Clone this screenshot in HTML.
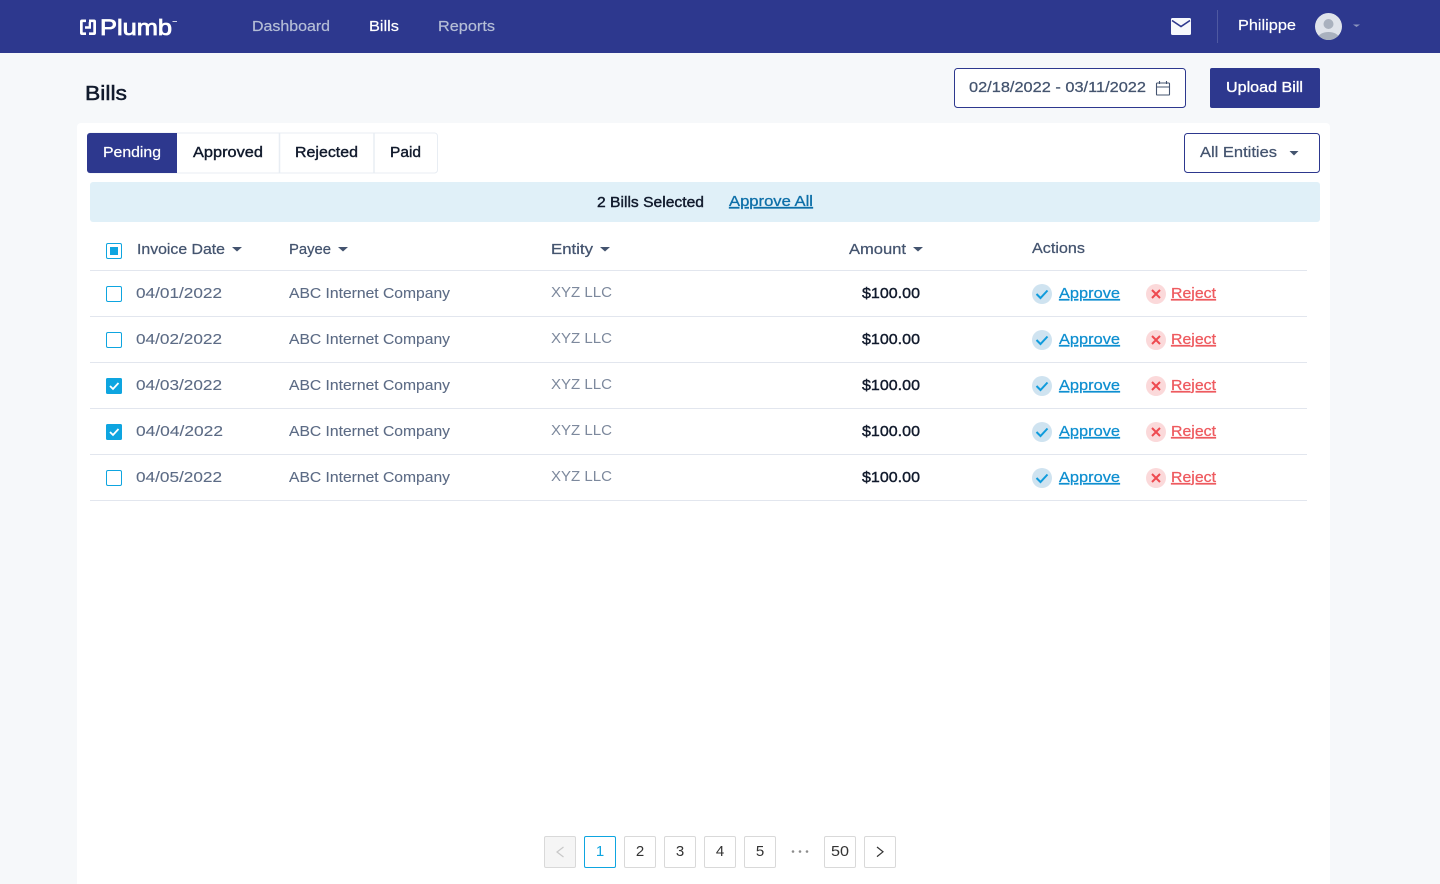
<!DOCTYPE html>
<html lang="en"><head><meta charset="utf-8"><title>Bills</title>
<style>
html,body{margin:0;padding:0;width:1440px;height:884px;overflow:hidden;background:#f6f8fa}
svg{display:block}
text{font-family:"Liberation Sans",sans-serif;font-size:15px;fill:#44546f;stroke:currentColor;stroke-width:0}
.n{fill:#b4bdd6;stroke:#b4bdd6;stroke-width:.2}.w{fill:#fff;stroke:#fff;stroke-width:.2}.k{fill:#111a2c}.h{fill:#44546f;stroke:#44546f;stroke-width:.25}.g{fill:#5c6b85;stroke:#5c6b85;stroke-width:.1}
.a{fill:#0f8fd0;stroke:#0f8fd0;stroke-width:.25}.r{fill:#ee5a5f;stroke:#ee5a5f;stroke-width:.25}
.b{fill:#111a2c;stroke:#111a2c;stroke-width:.4}
.p{fill:#333;text-anchor:middle}
</style></head><body>
<svg width="1440" height="884" viewBox="0 0 1440 884" xmlns="http://www.w3.org/2000/svg">
<rect width="1440" height="53" fill="#2d388e"/>
<rect y="53" width="1440" height="831" fill="#f6f8fa"/>
<!-- logo -->
<path d="M86 19.500H82a2 2 0 0 0-2 2V33a2 2 0 0 0 2 2h4v-2.600h-3.300V22.100H86z" fill="#fff"/>
<path d="M89 19.500h5a2 2 0 0 1 2 2V33a2 2 0 0 1-2 2h-5v-2.600h4.300V22.100H91V28.800H85V26.200H88.700V22.100H89z" fill="#fff"/>
<text x="100" y="35" textLength="72" lengthAdjust="spacingAndGlyphs" style="font-size:22px;fill:#fff;stroke:#fff;stroke-width:.8">Plumb</text>
<rect x="172.500" y="21" width="4.500" height="1" fill="#cfd3e6"/>
<!-- nav -->
<text x="252" y="31" class="n" textLength="78" lengthAdjust="spacingAndGlyphs" style="font-size:14.500px">Dashboard</text>
<text x="369" y="31" class="w" textLength="30" lengthAdjust="spacingAndGlyphs" style="font-size:14.500px">Bills</text>
<text x="438" y="31" class="n" textLength="57" lengthAdjust="spacingAndGlyphs" style="font-size:14.500px">Reports</text>
<!-- mail -->
<rect x="1171" y="18" width="20" height="17" rx="1.500" fill="#f6f8fc"/>
<path d="M1172 20.500l9 6 9-6" fill="none" stroke="#2d388e" stroke-width="1.600"/>
<rect x="1217" y="10" width="1" height="33" fill="#4f59a1"/>
<text x="1238" y="30" class="w" textLength="58" lengthAdjust="spacingAndGlyphs">Philippe</text>
<!-- avatar -->
<clipPath id="av"><circle cx="1328.500" cy="26.500" r="13.500"/></clipPath>
<circle cx="1328.500" cy="26.500" r="13.500" fill="#dfe3ea"/>
<g clip-path="url(#av)"><circle cx="1328.500" cy="24" r="5" fill="#a9b1be"/><ellipse cx="1328.500" cy="39" rx="11" ry="7" fill="#a9b1be"/></g>
<path d="M1353 24.500h7l-3.500 2.500z" fill="#8c94bd"/>
<!-- title -->
<text x="85" y="100" textLength="42" lengthAdjust="spacingAndGlyphs" style="font-size:20px;fill:#111a2c;stroke:#111a2c;stroke-width:.5">Bills</text>
<!-- date -->
<rect x="954.500" y="68.500" width="231" height="39" rx="3" fill="#fff" stroke="#2d388e"/>
<text x="969" y="92" class="h" textLength="177" lengthAdjust="spacingAndGlyphs">02/18/2022 - 03/11/2022</text>
<g fill="none" stroke="#44546f" stroke-width="1.100"><rect x="1156.500" y="83" width="13" height="12" rx=".8"/><path d="M1156.500 87h13M1159.500 81v3M1166.500 81v3"/></g>
<rect x="1210" y="68" width="110" height="40" rx="2" fill="#2d388e"/>
<text x="1226" y="92" textLength="77" lengthAdjust="spacingAndGlyphs" style="fill:#fff;stroke:#fff;stroke-width:.35">Upload Bill</text>
<!-- card -->
<rect x="77" y="123" width="1253" height="780" rx="4" fill="#fff"/>
<!-- tabs -->
<rect x="87.500" y="133" width="350" height="40" rx="3" fill="#fff" stroke="#e8edf3"/>
<path d="M177 133h-87a3 3 0 0 0-3 3v34a3 3 0 0 0 3 3h87z" fill="#2d388e"/>
<path d="M279.500 133v40M374 133v40" stroke="#e8edf3" stroke-width="1.500"/>
<text x="103" y="157" class="w" textLength="58" lengthAdjust="spacingAndGlyphs">Pending</text>
<text x="193" y="157" class="b" textLength="70" lengthAdjust="spacingAndGlyphs">Approved</text>
<text x="295" y="157" class="b" textLength="63" lengthAdjust="spacingAndGlyphs">Rejected</text>
<text x="390" y="157" class="b" textLength="31" lengthAdjust="spacingAndGlyphs">Paid</text>
<rect x="1184.500" y="133.500" width="135" height="39" rx="3" fill="#fff" stroke="#2d388e"/>
<text x="1200" y="157" class="h" textLength="77" lengthAdjust="spacingAndGlyphs">All Entities</text>
<path d="M1289.500 151h9l-4.500 4.500z" fill="#44546f"/>
<!-- banner -->
<rect x="90" y="182" width="1230" height="40" rx="3" fill="#e0f0f8"/>
<text x="597" y="207" class="b" textLength="107" lengthAdjust="spacingAndGlyphs" style="font-size:14.500px">2 Bills Selected</text>
<text x="729" y="206" textLength="84" lengthAdjust="spacingAndGlyphs" style="fill:#0d6fa8;stroke:#0d6fa8;stroke-width:.3;text-decoration:underline">Approve All</text>
<!-- header -->
<rect x="106.500" y="243.500" width="15" height="15" rx="1.500" fill="#fff" stroke="#0ea5e0"/>
<rect x="110" y="247" width="8" height="8" fill="#0ea5e0"/>
<text x="137" y="254" class="h" textLength="88" lengthAdjust="spacingAndGlyphs">Invoice Date</text>
<path d="M232 247h10l-5 4.500z" fill="#44546f"/>
<text x="289" y="254" class="h" textLength="42" lengthAdjust="spacingAndGlyphs">Payee</text>
<path d="M338 247h10l-5 4.500z" fill="#44546f"/>
<text x="551" y="254" class="h" textLength="42" lengthAdjust="spacingAndGlyphs">Entity</text>
<path d="M600 247h10l-5 4.500z" fill="#44546f"/>
<text x="849" y="254" class="h" textLength="57" lengthAdjust="spacingAndGlyphs">Amount</text>
<path d="M913 247h10l-5 4.500z" fill="#44546f"/>
<text x="1032" y="253" class="h" textLength="53" lengthAdjust="spacingAndGlyphs">Actions</text>
<!-- row lines -->
<path d="M90 270.500h1217M90 316.500h1217M90 362.500h1217M90 408.500h1217M90 454.500h1217M90 500.500h1217" stroke="#e2e6ee"/>

<!-- row 1 -->
<rect x="106.500" y="286.500" width="15" height="15" rx="1.500" fill="#fff" stroke="#0ea5e0"/>
<text x="136" y="298" class="g" textLength="86" lengthAdjust="spacingAndGlyphs">04/01/2022</text>
<text x="289" y="298" class="g" textLength="161" lengthAdjust="spacingAndGlyphs">ABC Internet Company</text>
<text x="551" y="297" style="fill:#7d899d" textLength="61" lengthAdjust="spacingAndGlyphs">XYZ LLC</text>
<text x="862" y="298" class="b" textLength="58" lengthAdjust="spacingAndGlyphs">$100.00</text>
<circle cx="1042" cy="294" r="10" fill="#cfe3f0"/><path d="M1036.500 294l4 4 7-7.500" fill="none" stroke="#0f9bdc" stroke-width="2"/>
<text x="1059" y="298" class="a" textLength="61" lengthAdjust="spacingAndGlyphs" style="text-decoration:underline">Approve</text>
<circle cx="1156" cy="294" r="10" fill="#fbd9da"/><path d="M1152 290l8 8m0-8l-8 8" fill="none" stroke="#ee4a50" stroke-width="2"/>
<text x="1171" y="298" class="r" textLength="45" lengthAdjust="spacingAndGlyphs" style="text-decoration:underline">Reject</text>

<!-- row 2 -->
<rect x="106.500" y="332.500" width="15" height="15" rx="1.500" fill="#fff" stroke="#0ea5e0"/>
<text x="136" y="344" class="g" textLength="86" lengthAdjust="spacingAndGlyphs">04/02/2022</text>
<text x="289" y="344" class="g" textLength="161" lengthAdjust="spacingAndGlyphs">ABC Internet Company</text>
<text x="551" y="343" style="fill:#7d899d" textLength="61" lengthAdjust="spacingAndGlyphs">XYZ LLC</text>
<text x="862" y="344" class="b" textLength="58" lengthAdjust="spacingAndGlyphs">$100.00</text>
<circle cx="1042" cy="340" r="10" fill="#cfe3f0"/><path d="M1036.500 340l4 4 7-7.500" fill="none" stroke="#0f9bdc" stroke-width="2"/>
<text x="1059" y="344" class="a" textLength="61" lengthAdjust="spacingAndGlyphs" style="text-decoration:underline">Approve</text>
<circle cx="1156" cy="340" r="10" fill="#fbd9da"/><path d="M1152 336l8 8m0-8l-8 8" fill="none" stroke="#ee4a50" stroke-width="2"/>
<text x="1171" y="344" class="r" textLength="45" lengthAdjust="spacingAndGlyphs" style="text-decoration:underline">Reject</text>

<!-- row 3 -->
<rect x="106" y="378" width="16" height="16" rx="1.500" fill="#0ea5e0"/><path d="M110 386l3 3 5.500-6" fill="none" stroke="#fff" stroke-width="1.800"/>
<text x="136" y="390" class="g" textLength="86" lengthAdjust="spacingAndGlyphs">04/03/2022</text>
<text x="289" y="390" class="g" textLength="161" lengthAdjust="spacingAndGlyphs">ABC Internet Company</text>
<text x="551" y="389" style="fill:#7d899d" textLength="61" lengthAdjust="spacingAndGlyphs">XYZ LLC</text>
<text x="862" y="390" class="b" textLength="58" lengthAdjust="spacingAndGlyphs">$100.00</text>
<circle cx="1042" cy="386" r="10" fill="#cfe3f0"/><path d="M1036.500 386l4 4 7-7.500" fill="none" stroke="#0f9bdc" stroke-width="2"/>
<text x="1059" y="390" class="a" textLength="61" lengthAdjust="spacingAndGlyphs" style="text-decoration:underline">Approve</text>
<circle cx="1156" cy="386" r="10" fill="#fbd9da"/><path d="M1152 382l8 8m0-8l-8 8" fill="none" stroke="#ee4a50" stroke-width="2"/>
<text x="1171" y="390" class="r" textLength="45" lengthAdjust="spacingAndGlyphs" style="text-decoration:underline">Reject</text>

<!-- row 4 -->
<rect x="106" y="424" width="16" height="16" rx="1.500" fill="#0ea5e0"/><path d="M110 432l3 3 5.500-6" fill="none" stroke="#fff" stroke-width="1.800"/>
<text x="136" y="436" class="g" textLength="87" lengthAdjust="spacingAndGlyphs">04/04/2022</text>
<text x="289" y="436" class="g" textLength="161" lengthAdjust="spacingAndGlyphs">ABC Internet Company</text>
<text x="551" y="435" style="fill:#7d899d" textLength="61" lengthAdjust="spacingAndGlyphs">XYZ LLC</text>
<text x="862" y="436" class="b" textLength="58" lengthAdjust="spacingAndGlyphs">$100.00</text>
<circle cx="1042" cy="432" r="10" fill="#cfe3f0"/><path d="M1036.500 432l4 4 7-7.500" fill="none" stroke="#0f9bdc" stroke-width="2"/>
<text x="1059" y="436" class="a" textLength="61" lengthAdjust="spacingAndGlyphs" style="text-decoration:underline">Approve</text>
<circle cx="1156" cy="432" r="10" fill="#fbd9da"/><path d="M1152 428l8 8m0-8l-8 8" fill="none" stroke="#ee4a50" stroke-width="2"/>
<text x="1171" y="436" class="r" textLength="45" lengthAdjust="spacingAndGlyphs" style="text-decoration:underline">Reject</text>

<!-- row 5 -->
<rect x="106.500" y="470.500" width="15" height="15" rx="1.500" fill="#fff" stroke="#0ea5e0"/>
<text x="136" y="482" class="g" textLength="86" lengthAdjust="spacingAndGlyphs">04/05/2022</text>
<text x="289" y="482" class="g" textLength="161" lengthAdjust="spacingAndGlyphs">ABC Internet Company</text>
<text x="551" y="481" style="fill:#7d899d" textLength="61" lengthAdjust="spacingAndGlyphs">XYZ LLC</text>
<text x="862" y="482" class="b" textLength="58" lengthAdjust="spacingAndGlyphs">$100.00</text>
<circle cx="1042" cy="478" r="10" fill="#cfe3f0"/><path d="M1036.500 478l4 4 7-7.500" fill="none" stroke="#0f9bdc" stroke-width="2"/>
<text x="1059" y="482" class="a" textLength="61" lengthAdjust="spacingAndGlyphs" style="text-decoration:underline">Approve</text>
<circle cx="1156" cy="478" r="10" fill="#fbd9da"/><path d="M1152 474l8 8m0-8l-8 8" fill="none" stroke="#ee4a50" stroke-width="2"/>
<text x="1171" y="482" class="r" textLength="45" lengthAdjust="spacingAndGlyphs" style="text-decoration:underline">Reject</text>

<!-- pagination -->
<g fill="#fff" stroke="#d9d9d9">
<rect x="544.500" y="836.500" width="31" height="31" rx="1.500" fill="#f5f5f5"/>
<rect x="584.500" y="836.500" width="31" height="31" rx="1.500" stroke="#0ea5e0"/>
<rect x="624.500" y="836.500" width="31" height="31" rx="1.500"/>
<rect x="664.500" y="836.500" width="31" height="31" rx="1.500"/>
<rect x="704.500" y="836.500" width="31" height="31" rx="1.500"/>
<rect x="744.500" y="836.500" width="31" height="31" rx="1.500"/>
<rect x="824.500" y="836.500" width="31" height="31" rx="1.500"/>
<rect x="864.500" y="836.500" width="31" height="31" rx="1.500"/>
</g>
<path d="M563.500 847l-6.500 5 6.500 5" fill="none" stroke="#c8c8c8" stroke-width="1.200"/>
<text x="600" y="856" class="p" style="fill:#0ea5e0">1</text>
<text x="640" y="856" class="p">2</text>
<text x="680" y="856" class="p">3</text>
<text x="720" y="856" class="p">4</text>
<text x="760" y="856" class="p">5</text>
<g fill="#8c8c8c"><circle cx="793" cy="851.500" r="1.300"/><circle cx="800" cy="851.500" r="1.300"/><circle cx="807" cy="851.500" r="1.300"/></g>
<text x="840" y="856" class="p" textLength="18" lengthAdjust="spacingAndGlyphs">50</text>
<path d="M877 847l6 4.800-6 4.800" fill="none" stroke="#333" stroke-width="1.200"/>
</svg>
</body></html>
